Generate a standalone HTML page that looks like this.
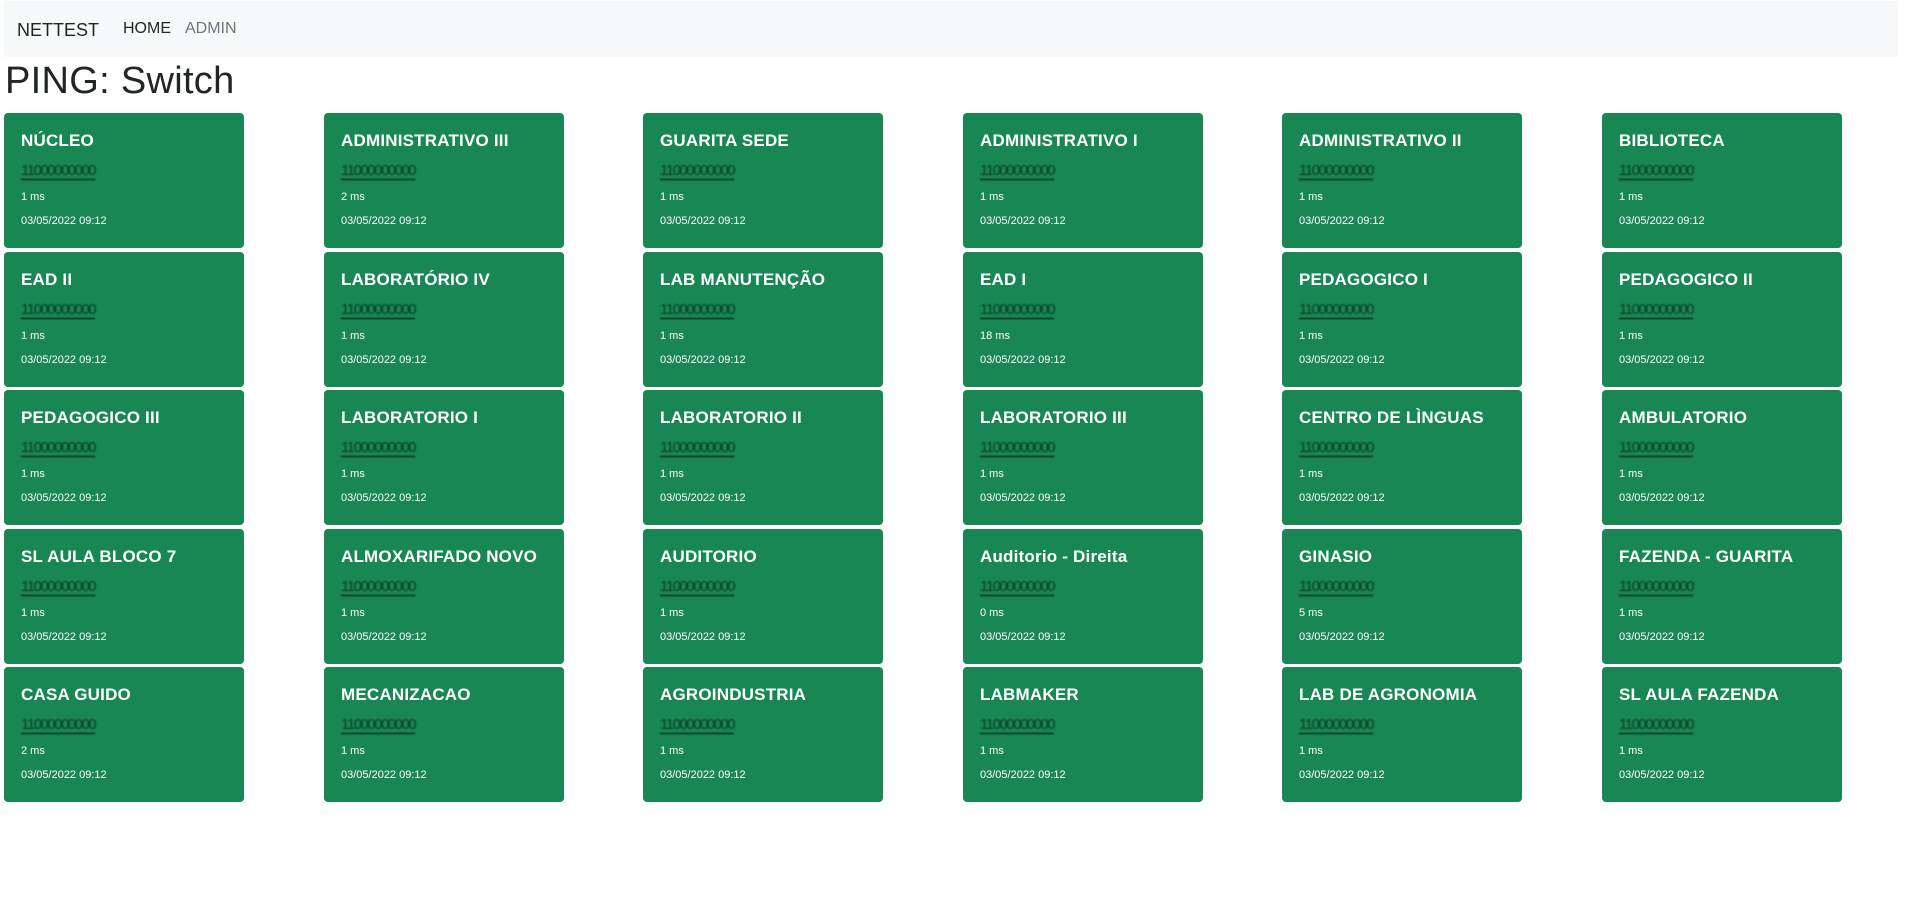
<!DOCTYPE html>
<html><head><meta charset="utf-8"><style>
body{margin:0;background:#fff;font-family:"Liberation Sans",sans-serif;width:1905px;height:909px;overflow:hidden;position:relative}
.nav{position:absolute;left:4px;top:1px;width:1894px;height:56px;background:#f8f9fa}
.nav span{position:absolute;top:19px}
.brand{left:13px;font-size:18px;color:#212529}
.h{left:119px;font-size:16px;color:#212529}
.a{left:181px;font-size:16px;color:#6c757d}
h1{position:absolute;left:5px;top:60px;margin:0;font-size:38px;font-weight:500;color:#212529;letter-spacing:0.3px}
.c{position:absolute;width:240px;height:135px;background:#198754;border-radius:4px;color:#fff}
.t{position:absolute;left:17px;top:18px;font-size:17px;font-weight:bold;white-space:nowrap;letter-spacing:0.2px}
.ip{position:absolute;left:17px;top:49px;font-size:15px;color:#0b3d22;filter:blur(0.7px);border-bottom:1px solid #000;letter-spacing:-1.5px}
.ms{position:absolute;left:17px;top:78px;font-size:11px}
.d{position:absolute;left:17px;top:102px;font-size:11px}
</style></head><body>
<div class="nav"><span class="brand">NETTEST</span><span class="h">HOME</span><span class="a">ADMIN</span></div>
<h1>PING: Switch</h1>
<div id="g"></div>
<script>
var n=["NÚCLEO","ADMINISTRATIVO III","GUARITA SEDE","ADMINISTRATIVO I","ADMINISTRATIVO II","BIBLIOTECA","EAD II","LABORATÓRIO IV","LAB MANUTENÇÃO","EAD I","PEDAGOGICO I","PEDAGOGICO II","PEDAGOGICO III","LABORATORIO I","LABORATORIO II","LABORATORIO III","CENTRO DE LÌNGUAS","AMBULATORIO","SL AULA BLOCO 7","ALMOXARIFADO NOVO","AUDITORIO","Auditorio - Direita","GINASIO","FAZENDA - GUARITA","CASA GUIDO","MECANIZACAO","AGROINDUSTRIA","LABMAKER","LAB DE AGRONOMIA","SL AULA FAZENDA"];
var m={1:"2 ms",9:"18 ms",21:"0 ms",22:"5 ms",24:"2 ms"};
var h="";
for(var i=0;i<30;i++){var x=4+Math.round((i%6)*319.6),y=113+Math.round(Math.floor(i/6)*138.5);
h+='<div class="c" style="left:'+x+'px;top:'+y+'px"><div class="t">'+n[i]+'</div><div class="ip">11000000000</div><div class="ms">'+(m[i]||"1 ms")+'</div><div class="d">03/05/2022 09:12</div></div>';}
document.getElementById("g").innerHTML=h;
</script>
</body></html>
